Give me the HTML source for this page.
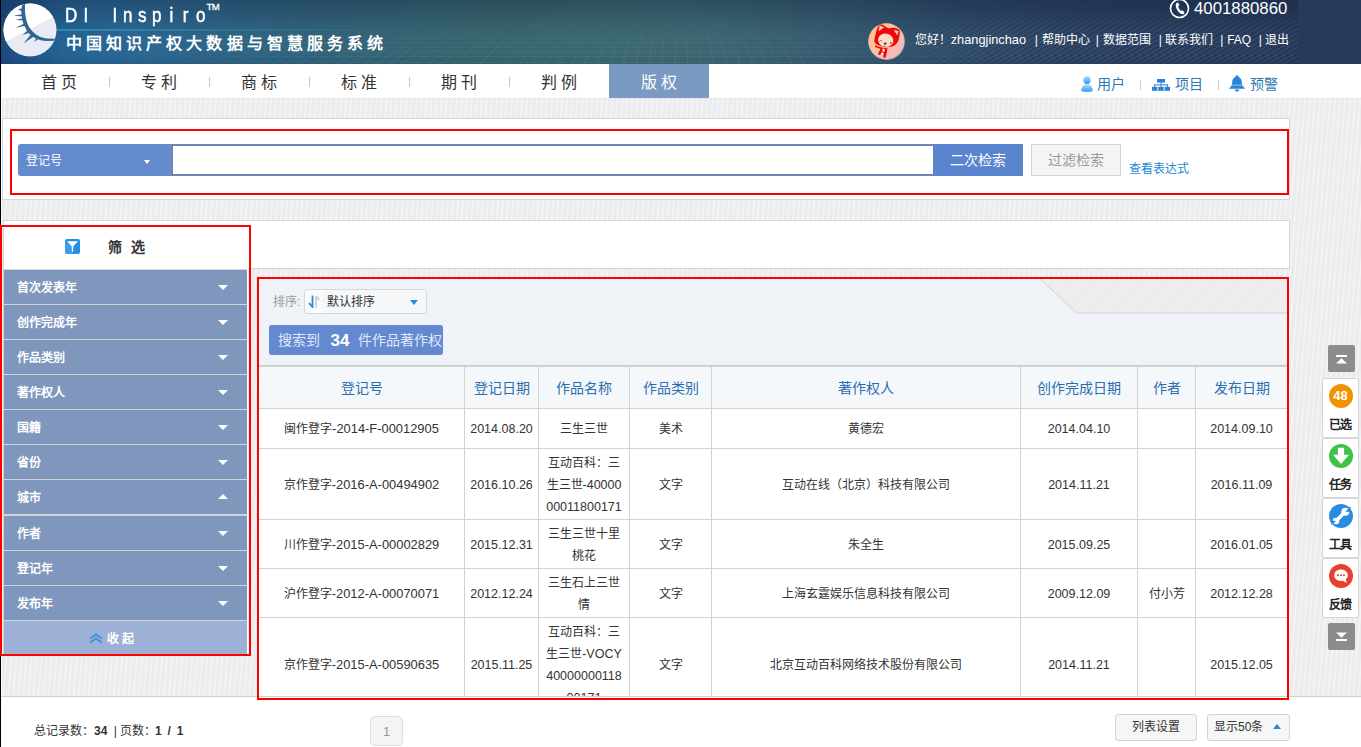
<!DOCTYPE html>
<html lang="zh-CN">
<head>
<meta charset="utf-8">
<title>DI Inspiro</title>
<style>
*{box-sizing:border-box;margin:0;padding:0}
html,body{width:1361px;height:747px;overflow:hidden}
body{position:relative;font-family:"Liberation Sans",sans-serif;font-size:12px;color:#333;
 background-color:#ebecee;
 background-image:repeating-linear-gradient(95deg,#ebecee 0,#ebecee 2.6px,#f3f4f6 3.4px,#f3f4f6 4.2px,#ebecee 5px);}
.abs{position:absolute}
/* ---------- header ---------- */
#hd{left:0;top:0;width:1361px;height:64px;background:#263a5a;overflow:hidden}
#hdbg{left:0;top:0;width:1298px;height:64px;
 background:
  linear-gradient(180deg,rgba(14,24,50,.30) 0,rgba(14,24,50,.10) 35%,rgba(14,24,50,0) 60%,rgba(14,24,50,0) 85%,rgba(14,24,50,.10) 100%),
  linear-gradient(90deg,#1c4a80 0,#246494 5%,#2a6894 10%,#2e6486 17%,#326379 26%,#37656f 36%,#3c6872 48%,#3b6572 56%,#36596f 65%,#2e4a67 74%,#2a4060 83%,#26395a 100%);}
#hdgrid{left:0;top:0}
#hdstreak{left:0;top:29px;width:400px;height:2px;background:linear-gradient(90deg,rgba(60,190,220,.12) 0,rgba(60,190,220,.45) 16%,rgba(60,190,220,.25) 45%,rgba(60,190,220,0) 100%);filter:blur(.5px)}
#hdrt{left:860px;top:8px;width:438px;height:56px;opacity:.085;background-image:repeating-linear-gradient(150deg,#fff 0,#fff .9px,transparent .9px,transparent 4px);-webkit-mask-image:linear-gradient(90deg,transparent 0,#000 35%),linear-gradient(180deg,transparent 0,#000 40%);-webkit-mask-composite:source-in;mask-image:linear-gradient(90deg,transparent 0,#000 35%),linear-gradient(180deg,transparent 0,#000 40%);mask-composite:intersect}
#logo{left:2.500px;top:2.500px;width:54px;height:54px}
#brand{left:65px;top:3px;height:24px;color:#fff;font-size:20px;line-height:24px;white-space:nowrap}
#brand span{display:inline-block;width:14.55px;text-align:left;transform:scaleX(.85);transform-origin:0 50%;-webkit-text-stroke:.5px #fff}
#tm{left:206.500px;top:1px;color:#fff;font-size:9.500px;line-height:12px;letter-spacing:-.5px;-webkit-text-stroke:.3px #fff}
#title{left:66px;top:32.500px;color:#fff;font-size:16px;line-height:22px;font-weight:bold;letter-spacing:4.070px;white-space:nowrap}
#phone{left:1194px;top:-1px;color:#fff;font-size:16.800px;line-height:20px;white-space:nowrap}
#phoneic{left:1169px;top:-2px;width:21px;height:21px}
#avatar{left:867px;top:22px;width:38px;height:38px}
#ulinks{left:914.700px;top:30px;color:#fff;font-size:12px;line-height:20px;white-space:nowrap}
#ulinks span{position:absolute;top:0}
#ulinks em{font-style:normal;font-size:12.800px}
/* ---------- nav ---------- */
#nav{left:0;top:64px;width:1361px;height:34px;background:#fff}
#navline{left:0;top:98px;width:1361px;height:1px;background:#e6e6e6}
.ni{position:absolute;top:0;width:100px;height:34px;line-height:37px;text-align:center;font-size:16px;color:#333;letter-spacing:4.4px;text-indent:4.4px}
.ni.on{background:#7b9ac1;color:#fff}
.nsep{position:absolute;top:13px;width:1px;height:10px;background:#c8c8c8}
.rl{position:absolute;top:11px;font-size:14px;line-height:18px;color:#2b78b4;white-space:nowrap}
.rsep{position:absolute;top:16px;width:1px;height:10px;background:#ccc}
#blackline{left:0;top:0;width:1px;height:747px;background:#000;z-index:15}
#whiteline{left:1px;top:98px;width:1px;height:649px;background:#f9fafb;z-index:1}

/* ---------- panels ---------- */
.panel{position:absolute;background:#fff;border:1px solid #d6d6d6}
.red{position:absolute;border:2px solid #fe0000;z-index:20;pointer-events:none}
#sel{left:18px;top:144px;width:153px;height:32px;background:#648bcd;border-radius:3px 0 0 3px;color:#fff;font-size:12px;line-height:35px;padding-left:7.500px}
#sel b{position:absolute;left:126px;top:16px;width:0;height:0;border-left:3.700px solid transparent;border-right:3.700px solid transparent;border-top:4px solid #fff}
#inp{left:171px;top:144px;width:763px;height:32px;background:#fff;border:2px solid #6d86ae;border-right-width:1px}
#b1{left:933px;top:144px;width:90px;height:32px;background:#5b84cf;color:#fff;font-size:14px;line-height:32px;text-align:center}
#b2{left:1031px;top:144px;width:90px;height:32px;background:#f4f5f5;border:1px solid #d6d6d6;color:#999;font-size:14px;line-height:30px;text-align:center}
#lk{left:1128.500px;top:160.500px;color:#1a88d2;font-size:12px;line-height:16px;white-space:nowrap}
/* sidebar */
#sb{left:3px;top:227px;width:245px;height:427px;background:#fff;border-left:1px solid #d2d2d2}
#sbh{left:0;top:0;width:244px;height:42px}
#sbh .fi{position:absolute;left:61px;top:12px;width:15px;height:15px}
#sbh .t{position:absolute;left:104px;top:10px;font-size:14px;font-weight:bold;line-height:20px;color:#333;letter-spacing:8.600px;white-space:nowrap}
.si{position:absolute;left:0;width:243px;height:34px;background:#7f97bd;color:#fff;font-weight:bold;font-size:12px;line-height:37px;padding-left:13px;border-top:0}
.si:after{content:"";position:absolute;left:214px;top:15px;border-left:5px solid transparent;border-right:5px solid transparent;border-top:5px solid #fff}
.si.up:after{border-top:0;border-bottom:5px solid #fff;top:14px}
.sl{position:absolute;left:0;width:243px;height:1px;background:#d2d4d7}
#sbf{left:0;top:394px;width:243px;height:33px;background:#9db1d6;color:#fff;font-weight:bold;font-size:12px;line-height:36px;letter-spacing:2px}

/* ---------- results ---------- */
#rs{left:259px;top:279px;width:1028px;height:417px;overflow:hidden;background:#fff}
#tb{left:0;top:0;width:1028px;height:86px;background:#eff3f7}
#tbl{left:0;top:86px;width:1028px;height:2px;background:linear-gradient(180deg,#c4c6c8,#d9dbdd)}
#hatch{left:781px;top:0;width:247px;height:35px}
#sortl{left:14px;top:13.500px;color:#999;font-size:12px;line-height:18px}
#sortd{left:45px;top:10px;width:123px;height:25px;border:1px solid #d5d7d9;border-radius:3px;background:#f5f7f8;font-size:12px;line-height:23px;color:#333}
#sortd .ic{position:absolute;left:0;top:0;width:17px;height:23px;background:#fafbfb;border-radius:3px 0 0 3px}
#sortd .tx{position:absolute;left:22px;top:1px}
#sortd .cr{position:absolute;left:105px;top:10px;border-left:4.500px solid transparent;border-right:4.500px solid transparent;border-top:5px solid #2a8ad4}
#chip{left:10px;top:46px;width:174px;height:30px;background:#6489d0;border-radius:3px;overflow:hidden;white-space:nowrap;color:#dfe9fb;font-size:14px;line-height:30px;padding-left:9px}
#chip b{color:#fff;font-size:17px;margin:0 9px 0 10.500px;position:relative;top:1px}
.tr{position:absolute;left:0;width:1028px;display:flex}
.tr>div{border-right:1px solid #d2d2d2;border-bottom:1px solid #d2d2d2;padding-top:1.500px;display:flex;align-items:center;justify-content:center;text-align:center;font-size:12px;line-height:22px;color:#333;white-space:nowrap;flex:none}
.tr>div:last-child{border-right:0}
.tr.h>div{background:#f5f8fa;color:#2a6eb2;font-size:14px}
.c1{width:206px}.c1 .n{font-size:12.900px}.c2{width:74px}.c3{width:91px}.c4{width:82px}.c5{width:309px}.c6{width:117px}.c7{width:58px}.c8{width:91px}
.n{font-size:12.500px}
.tr>div.n{font-size:12.500px}
/* ---------- footer ---------- */
#ft{left:0;top:696px;width:1361px;height:51px;background:#fff;border-top:1px solid #cfcfcf;z-index:10}
#ft .tot{position:absolute;left:34px;top:24.500px;font-size:12px;line-height:18px;color:#333;white-space:nowrap}
#ft .pg{position:absolute;left:370px;top:19px;width:33px;height:30px;border:1px solid #ddd;border-radius:5px;background:#f4f4f4;color:#999;font-size:13px;line-height:30px;text-align:center}
.fb{position:absolute;top:17px;height:27px;border:1px solid #d2d2d2;border-radius:3px;background:#f5f6f6;color:#333;font-size:12px;line-height:25px;text-align:center;white-space:nowrap}
/* ---------- right toolbar ---------- */
.gb{position:absolute;left:1328px;width:27px;height:27px;background:#8c8c8c;border-radius:2px;z-index:30}
.tbx{position:absolute;left:1322px;width:37px;height:60px;background:#fff;border:1px solid #d6d6d6;border-radius:2px;z-index:30;text-align:center}
.tbx .c{position:absolute;left:6px;top:5px;width:24px;height:24px;border-radius:12px}
.tbx .l{position:absolute;left:0;top:37px;width:35px;font-size:12px;line-height:18px;color:#222;font-weight:bold;letter-spacing:-.2px}
</style>
</head>
<body>
<!-- HEADER -->
<div id="hd" class="abs">
 <div id="hdbg" class="abs"></div>
 <svg id="hdgrid" class="abs" width="1298" height="64" viewBox="0 0 1298 64"><defs><linearGradient id="gm" x1="0" y1="0" x2="0" y2="1"><stop offset=".25" stop-color="#000"/><stop offset="1" stop-color="#fff"/></linearGradient><linearGradient id="gm2" x1="0" y1="0" x2="1" y2="0"><stop offset=".08" stop-color="#000"/><stop offset=".3" stop-color="#fff"/><stop offset=".62" stop-color="#fff"/><stop offset=".8" stop-color="#000"/></linearGradient><mask id="gk"><rect width="1298" height="64" fill="url(#gm)"/></mask><mask id="gk2"><rect width="1298" height="64" fill="url(#gm2)"/></mask></defs><g mask="url(#gk2)"><path mask="url(#gk)" d="M231,14L77,64M241,14L90,64M250,14L103,64M260,14L116,64M270,14L129,64M279,14L142,64M289,14L155,64M299,14L168,64M308,14L181,64M318,14L194,64M328,14L207,64M337,14L220,64M347,14L233,64M357,14L246,64M366,14L259,64M376,14L272,64M386,14L285,64M395,14L298,64M405,14L311,64M414,14L324,64M424,14L337,64M434,14L350,64M443,14L363,64M453,14L376,64M463,14L389,64M472,14L402,64M482,14L415,64M492,14L428,64M501,14L441,64M511,14L454,64M521,14L467,64M530,14L480,64M540,14L493,64M550,14L506,64M559,14L519,64M569,14L532,64M579,14L545,64M588,14L558,64M598,14L571,64M607,14L584,64M617,14L597,64M627,14L610,64M636,14L623,64M646,14L636,64M656,14L649,64M665,14L662,64M675,14L675,64M685,14L688,64M694,14L701,64M704,14L714,64M714,14L727,64M723,14L740,64M733,14L753,64M743,14L766,64M752,14L779,64M762,14L792,64M771,14L805,64M781,14L818,64M791,14L831,64M800,14L844,64M810,14L857,64M820,14L870,64M829,14L883,64M839,14L896,64M849,14L909,64M858,14L922,64M868,14L935,64M878,14L948,64M887,14L961,64M897,14L974,64M907,14L987,64M916,14L1000,64M926,14L1013,64M936,14L1026,64M945,14L1039,64M955,14L1052,64M964,14L1065,64M974,14L1078,64M984,14L1091,64M993,14L1104,64M1003,14L1117,64M1013,14L1130,64M1022,14L1143,64M1032,14L1156,64M1042,14L1169,64M1051,14L1182,64M60,62H1200M60,56.7H1200M60,51.6H1200M60,47H1200M60,43H1200M60,39.2H1200M60,35.8H1200M60,32.8H1200M60,30.1H1200M60,27.7H1200M60,25.5H1200M60,23.5H1200M60,21.7H1200M60,20.1H1200M60,18.7H1200M60,17.4H1200" stroke="#9fd0c8" stroke-opacity=".16" stroke-width=".8" fill="none"/></g></svg>
 <div id="hdstreak" class="abs"></div><div id="hdrt" class="abs"></div>
 <svg id="logo" class="abs" viewBox="0 0 54 54">
  <defs><clipPath id="lc"><circle cx="27" cy="27" r="26.5"/></clipPath></defs>
  <circle cx="27" cy="27" r="26.5" fill="#e8ebf4"/>
  <polygon clip-path="url(#lc)" points="0,0 54,0 54,12 0,40" fill="#ffffff"/>
  <path clip-path="url(#lc)" fill="#2f6792" d="M22.100,0.500 C21.800,6 22,11 23,15.500 C24,20 25.500,23.500 27.500,26 C29.800,29 32.500,31.500 35.500,33 C38.500,34.500 41.500,35.300 44.500,35.500 L53.500,35.800 L53.500,37.700 L43.500,38 C40,37.900 37.500,37.300 35,36.300 L31,39 L33,35.500 L30,34 L20.500,40.500 L27.500,32 L25.500,30 L19.500,32 L24,28 L21.500,23 L12.500,24.800 L20.500,21 L19.500,17.500 L12.500,16.800 L19,15.500 L19,13.500 L10.500,12.500 L18.500,11.500 L18.300,8 L15,6.500 L18.500,5.500 L19.300,1 Z"/>
 </svg>
 <div id="brand" class="abs"><span>D</span><span style="text-indent:4px">I</span><span>&nbsp;</span><span style="text-indent:4px">I</span><span>n</span><span>s</span><span>p</span><span style="text-indent:3px">i</span><span style="text-indent:2px">r</span><span>o</span></div>
 <div id="tm" class="abs">TM</div>
 <div id="title" class="abs">中国知识产权大数据与智慧服务系统</div>
 <svg id="phoneic" class="abs" viewBox="0 0 21 21">
  <circle cx="10.5" cy="10.5" r="9" fill="none" stroke="#fff" stroke-width="1.6"/>
  <path fill="#fff" d="M7.6,5 L9.2,4.6 L10.4,7.6 L9.2,8.6 C9.6,10.4 10.6,11.9 12.1,13 L13.4,12.2 L15.6,14.4 L14.8,15.9 C13.9,16.5 12.6,16.2 11.4,15.4 C8.9,13.7 7.2,11 6.8,8 C6.6,6.700 6.9,5.600 7.6,5 Z"/>
 </svg>
 <div id="phone" class="abs">4001880860</div>
 <svg id="avatar" class="abs" viewBox="0 0 38 38">
  <defs><clipPath id="ac"><circle cx="19.300" cy="19.200" r="17.800"/></clipPath>
  <linearGradient id="ag" x1="0.2" y1="0" x2="0.8" y2="1"><stop offset="0" stop-color="#fcc088"/><stop offset=".55" stop-color="#fbc3a8"/><stop offset="1" stop-color="#f8b4c4"/></linearGradient></defs>
  <circle cx="19.600" cy="19.600" r="18.300" fill="#9fb0ba"/>
  <circle cx="19.300" cy="19.200" r="17.800" fill="url(#ag)"/>
  <g clip-path="url(#ac)">
   <path fill="#ee0a0a" d="M13.500,1.900 C15.500,2.300 17.500,3.600 18.800,5 C20,5.400 21,5.900 22,6.500 C24,5.600 26.500,5.500 28.500,5.900 C30.500,6.300 32,7.200 32.700,8.500 C33,11 32.600,14 31.900,16.500 C31.500,19.500 29.500,22.300 27,23.800 C24,25.300 20.500,25.500 17.800,24.900 C15,24.600 12.500,24 11,23.100 C8.500,22 7,20.200 7.300,18.200 C7.800,15 8.800,11.500 9.500,8.300 C10.300,5.500 11.800,3.200 13.500,1.900 Z"/>
   <path fill="#ee0a0a" d="M8,23.300 C10.500,24.300 13.500,25.200 16,25.800 L20.500,26.300 L19.800,31 L18.600,35.800 L16.200,35.300 L16.800,31.500 L14.500,31.800 L12.800,33 L10.800,32 L12.500,29 L13.400,26.600 C11.500,26.300 9.500,25.600 8,24.900 Z"/>
   <ellipse cx="18.700" cy="18.300" rx="7.700" ry="6.700" fill="#fddcc4" transform="rotate(12 18.700 18.300)"/>
   <path fill="#fdd3b8" d="M12.700,3.300 L17,5.500 L11.600,9.300 Z M26.900,8 L31.600,9 L30.200,13.500 Z"/>
   <path d="M12.200,19.600 q1.300,-1.800 2.800,-.5 M23,20 l2,1 l-2.200,.9" stroke="#b04838" stroke-width=".8" fill="none"/>
   <ellipse cx="18.200" cy="21.700" rx="1.500" ry="1.100" fill="#2a4a86"/>
   <path d="M16.800,24 q1,.9 2,.1" stroke="#c02020" stroke-width=".7" fill="none"/>
   <path fill="#fff" d="M14.200,30.600 L16.500,30.900 L16.200,32.300 L14,32 Z"/>
   <path fill="#fddcc4" d="M15.500,26.600 L18,26.900 L17.300,30 L15.300,29.700 Z"/>
  </g>
 </svg>
 <div id="ulinks" class="abs"><span style="left:0">您好！<em>zhangjinchao</em></span><span style="left:120px">|</span><span style="left:127px">帮助中心</span><span style="left:181px">|</span><span style="left:188px">数据范围</span><span style="left:244px">|</span><span style="left:250.500px">联系我们</span><span style="left:305.500px">|</span><span style="left:312.500px">FAQ</span><span style="left:344px">|</span><span style="left:350.500px">退出</span></div>
</div>
<!-- NAV -->
<div id="nav" class="abs">
 <div class="ni" style="left:9px">首页</div><div class="nsep" style="left:109px"></div>
 <div class="ni" style="left:109px">专利</div><div class="nsep" style="left:209px"></div>
 <div class="ni" style="left:209px">商标</div><div class="nsep" style="left:309px"></div>
 <div class="ni" style="left:309px">标准</div><div class="nsep" style="left:409px"></div>
 <div class="ni" style="left:409px">期刊</div><div class="nsep" style="left:509px"></div>
 <div class="ni" style="left:509px">判例</div>
 <div class="ni on" style="left:609px">版权</div>
 <svg class="abs" style="left:1081px;top:12px" width="12" height="16" viewBox="0 0 12 16">
  <defs><linearGradient id="ug" x1="0" y1="0" x2="0" y2="1"><stop offset="0" stop-color="#a6dcff"/><stop offset="1" stop-color="#3a98f0"/></linearGradient></defs>
  <ellipse cx="6" cy="4.2" rx="3.6" ry="4" fill="url(#ug)"/>
  <path d="M0.3,15 C0.3,10.500 2.500,8.600 6,8.600 C9.500,8.600 11.700,10.500 11.700,15 C9,16.200 3,16.200 0.300,15 Z" fill="url(#ug)"/>
 </svg>
 <div class="rl" style="left:1097px">用户</div>
 <div class="rsep" style="left:1140px"></div>
 <svg class="abs" style="left:1152px;top:15px" width="18" height="12" viewBox="0 0 18 12">
  <g fill="#2a7fd0"><rect x="5" y="0" width="8" height="3.600"/><rect x="8.500" y="3.600" width="1" height="2"/><rect x="2.200" y="5.400" width="13.600" height="1"/><rect x="2.200" y="5.400" width="1" height="2.400"/><rect x="14.800" y="5.400" width="1" height="2.400"/><rect x="8.500" y="5.400" width="1" height="2.400"/><rect x="0" y="7.800" width="5.400" height="4"/><rect x="6.300" y="7.800" width="5.400" height="4"/><rect x="12.600" y="7.800" width="5.400" height="4"/></g>
 </svg>
 <div class="rl" style="left:1175px">项目</div>
 <div class="rsep" style="left:1218px"></div>
 <svg class="abs" style="left:1229px;top:11px" width="16" height="17" viewBox="0 0 16 17">
  <path fill="#2a86d8" d="M8,0.300 C9,0.300 9.600,1 9.500,2 C11.800,2.800 12.800,4.800 12.800,7.500 C12.800,10.300 13.800,11.800 15.800,13 L15.800,13.800 L0.200,13.800 L0.200,13 C2.200,11.800 3.200,10.300 3.200,7.500 C3.200,4.800 4.200,2.800 6.500,2 C6.400,1 7,0.300 8,0.300 Z M5.800,14.600 L10.200,14.600 C10.100,15.900 9.200,16.700 8,16.700 C6.800,16.700 5.900,15.900 5.800,14.600 Z"/><rect x="2.600" y="9.600" width="10.800" height="1" fill="#8cc4f2"/>
 </svg>
 <div class="rl" style="left:1250px">预警</div>
</div>
<div id="navline" class="abs"></div>
<!-- SEARCH PANEL -->
<div class="panel" style="left:2px;top:118px;width:1288px;height:82px"></div>
<div class="red" style="left:10px;top:129px;width:1279px;height:66px"></div>
<div id="sel" class="abs">登记号<b></b></div>
<div id="inp" class="abs"></div>
<div id="b1" class="abs">二次检索</div>
<div id="b2" class="abs">过滤检索</div>
<div id="lk" class="abs">查看表达式</div>
<!-- PANEL 2 -->
<div class="panel" style="left:3px;top:220px;width:1287px;height:49px"></div>
<!-- SIDEBAR -->
<div id="sb" class="abs">
 <div id="sbh" class="abs">
  <svg class="fi" viewBox="0 0 15 15"><rect x="0" y="0" width="15" height="15" rx="2" fill="#2490e0"/><path d="M0,2 L7.500,8 L7.500,15 L2,15 Q0,15 0,13 Z" fill="#3d9fea"/><path d="M2,2.300 L13,2.300 L8.200,7.500 L8.100,12.700 L6.900,12.700 L6.800,7.500 Z" fill="#fff"/></svg>
  <div class="t">筛选</div>
 </div>
 <div class="sl" style="top:42px;background:#d8d8d8"></div>
 <div class="si" style="top:43px">首次发表年</div><div class="sl" style="top:77px"></div>
 <div class="si" style="top:78px">创作完成年</div><div class="sl" style="top:112px"></div>
 <div class="si" style="top:113px">作品类别</div><div class="sl" style="top:147px"></div>
 <div class="si" style="top:148px">著作权人</div><div class="sl" style="top:182px"></div>
 <div class="si" style="top:183px">国籍</div><div class="sl" style="top:217px"></div>
 <div class="si" style="top:218px">省份</div><div class="sl" style="top:252px"></div>
 <div class="si up" style="top:253px">城市</div><div class="sl" style="top:287px;height:2px"></div>
 <div class="si" style="top:289px">作者</div><div class="sl" style="top:323px"></div>
 <div class="si" style="top:324px">登记年</div><div class="sl" style="top:358px"></div>
 <div class="si" style="top:359px">发布年</div><div class="sl" style="top:393px"></div>
 <div id="sbf" class="abs"><svg class="abs" style="left:84.500px;top:12px" width="13.800" height="10.600" viewBox="0 0 15 12"><path d="M1,6.500 L7.500,1.500 L14,6.500 M1,11 L7.500,6 L14,11" fill="none" stroke="#2f8fe0" stroke-width="1.800"/></svg><span class="abs" style="left:102.500px;top:0;letter-spacing:3.400px">收起</span></div>
</div>
<div class="red" style="left:0;top:225px;width:251px;height:431px"></div>
<div id="rs" class="abs">
 <div id="tb" class="abs"></div>
 <svg id="hatch" class="abs" viewBox="0 0 247 35"><defs><pattern id="hp" width="3" height="3" patternUnits="userSpaceOnUse"><rect width="3" height="3" fill="#f0f0f0"/><path d="M0,3 L3,0" stroke="#e5e5e5" stroke-width=".8"/></pattern></defs><polygon points="0,0 247,0 247,34 37,34" fill="url(#hp)"/><path d="M0,0 L37,34 L247,34" fill="none" stroke="#d0d2d4" stroke-width="1"/></svg>
 <div id="sortl" class="abs">排序:</div>
 <div id="sortd" class="abs"><div class="ic"><svg class="abs" style="left:3px;top:5px" width="12" height="13" viewBox="0 0 12 13"><path d="M4.500,0.500 L4.500,10 M1,8 L4.500,12 L4.500,8" fill="none" stroke="#2a8ad4" stroke-width="1.800"/><path d="M8,12.500 L8,2.500 M8,1 L11.200,5" fill="none" stroke="#c8c8c8" stroke-width="1.600"/></svg></div><div class="tx">默认排序</div><div class="cr"></div></div>
 <div id="chip" class="abs">搜索到<b>34</b>件作品著作权</div>
 <div id="tbl" class="abs"></div>
 <div class="tr h" style="top:88px;height:42px"><div class="c1">登记号</div><div class="c2">登记日期</div><div class="c3">作品名称</div><div class="c4">作品类别</div><div class="c5">著作权人</div><div class="c6">创作完成日期</div><div class="c7">作者</div><div class="c8">发布日期</div></div>
 <div class="tr" style="top:130px;height:40px"><div class="c1"><span>闽作登字<span class="n">-2014-F-00012905</span></span></div><div class="c2 n">2014.08.20</div><div class="c3"><span>三生三世</span></div><div class="c4">美术</div><div class="c5">黄德宏</div><div class="c6 n">2014.04.10</div><div class="c7"></div><div class="c8 n">2014.09.10</div></div>
 <div class="tr" style="top:170px;height:71px"><div class="c1"><span>京作登字<span class="n">-2016-A-00494902</span></span></div><div class="c2 n">2016.10.26</div><div class="c3"><span>互动百科：三<br>生三世<span class="n">-40000</span><br><span class="n">00011800171</span></span></div><div class="c4">文字</div><div class="c5">互动在线（北京）科技有限公司</div><div class="c6 n">2014.11.21</div><div class="c7"></div><div class="c8 n">2016.11.09</div></div>
 <div class="tr" style="top:241px;height:49px"><div class="c1"><span>川作登字<span class="n">-2015-A-00002829</span></span></div><div class="c2 n">2015.12.31</div><div class="c3"><span>三生三世十里<br>桃花</span></div><div class="c4">文字</div><div class="c5">朱全生</div><div class="c6 n">2015.09.25</div><div class="c7"></div><div class="c8 n">2016.01.05</div></div>
 <div class="tr" style="top:290px;height:49px"><div class="c1"><span>沪作登字<span class="n">-2012-A-00070071</span></span></div><div class="c2 n">2012.12.24</div><div class="c3"><span>三生石上三世<br>情</span></div><div class="c4">文字</div><div class="c5">上海玄霆娱乐信息科技有限公司</div><div class="c6 n">2009.12.09</div><div class="c7">付小芳</div><div class="c8 n">2012.12.28</div></div>
 <div class="tr" style="top:339px;height:93px"><div class="c1"><span>京作登字<span class="n">-2015-A-00590635</span></span></div><div class="c2 n">2015.11.25</div><div class="c3"><span>互动百科：三<br>生三世<span class="n">-VOCY</span><br><span class="n">40000000118</span><br><span class="n">00171</span></span></div><div class="c4">文字</div><div class="c5">北京互动百科网络技术股份有限公司</div><div class="c6 n">2014.11.21</div><div class="c7"></div><div class="c8 n">2015.12.05</div></div>
</div>
<div class="red" style="left:257px;top:277px;width:1032px;height:423px"></div>
<!-- FOOTER -->
<div id="ft" class="abs">
 <div class="tot">总记录数：<b>34</b> <span style="margin-left:3px">|</span> 页数：<b style="letter-spacing:1.300px;margin-left:-1.300px">1 / 1</b></div>
 <div class="pg">1</div>
 <div class="fb" style="left:1115px;width:82px">列表设置</div>
 <div class="fb" style="left:1207px;width:83px;text-align:left;padding-left:6px">显示50条<i class="abs" style="left:65px;top:9px;border-left:4.500px solid transparent;border-right:4.500px solid transparent;border-bottom:5px solid #2a8ad4"></i></div>
</div>
<!-- RIGHT TOOLBAR -->
<div class="gb" style="top:345px"><svg class="abs" style="left:7px;top:9px" width="13" height="11" viewBox="0 0 13 11"><rect x="1" y="1" width="11" height="2" fill="#fff"/><path d="M6.500,4.300 L12,9.600 L1,9.600 Z" fill="#fff"/></svg></div>
<div class="tbx" style="top:378px"><div class="c" style="background:#f39200"></div><div class="abs" style="left:0;top:5px;width:35px;line-height:24px;color:#fff;font-weight:bold;font-size:13px">48</div><div class="l">已选</div></div>
<div class="tbx" style="top:438px"><div class="c" style="background:#3ec24a"></div><svg class="abs" style="left:6px;top:5px" width="24" height="24" viewBox="0 0 24 24"><path d="M8.900,3.800 L15.100,3.800 L15.100,10.800 L20,10.800 L12,20 L4,10.800 L8.900,10.800 Z" fill="#fff"/></svg><div class="l">任务</div></div>
<div class="tbx" style="top:498px"><div class="c" style="background:#2a8be2"></div><svg class="abs" style="left:6px;top:5px" width="24" height="24" viewBox="0 0 24 24"><path d="M7,17 L15.500,8.500" stroke="#fff" stroke-width="3.600" stroke-linecap="round" fill="none"/><circle cx="16.300" cy="7.700" r="4" fill="#fff"/><circle cx="7" cy="17" r="3.300" fill="#fff"/><path d="M16.300,7.700 L21.500,2.500 L22,8 Z" fill="#2a8be2"/><path d="M7,17 L2.500,21.500 L2.500,16.500 Z" fill="#2a8be2"/></svg><div class="l">工具</div></div>
<div class="tbx" style="top:558px"><div class="c" style="background:#e8402f"></div><svg class="abs" style="left:6px;top:5px" width="24" height="24" viewBox="0 0 24 24"><path d="M12,5.500 C16,5.500 18.800,8 18.800,11.300 C18.800,13 18,14.500 16.800,15.500 L17.800,19 L14,16.800 C13.400,16.950 12.700,17 12,17 C8,17 5.200,14.500 5.200,11.300 C5.200,8 8,5.500 12,5.500 Z" fill="#fff"/><circle cx="9" cy="11.300" r="1" fill="#e8402f"/><circle cx="12" cy="11.300" r="1" fill="#e8402f"/><circle cx="15" cy="11.300" r="1" fill="#e8402f"/></svg><div class="l">反馈</div></div>
<div class="gb" style="top:623px"><svg class="abs" style="left:7px;top:8px" width="13" height="11" viewBox="0 0 13 11"><rect x="1" y="8" width="11" height="2" fill="#fff"/><path d="M6.500,6.700 L12,1.400 L1,1.400 Z" fill="#fff"/></svg></div>


<div id="blackline" class="abs"></div><div id="whiteline" class="abs"></div>
</body>
</html>
